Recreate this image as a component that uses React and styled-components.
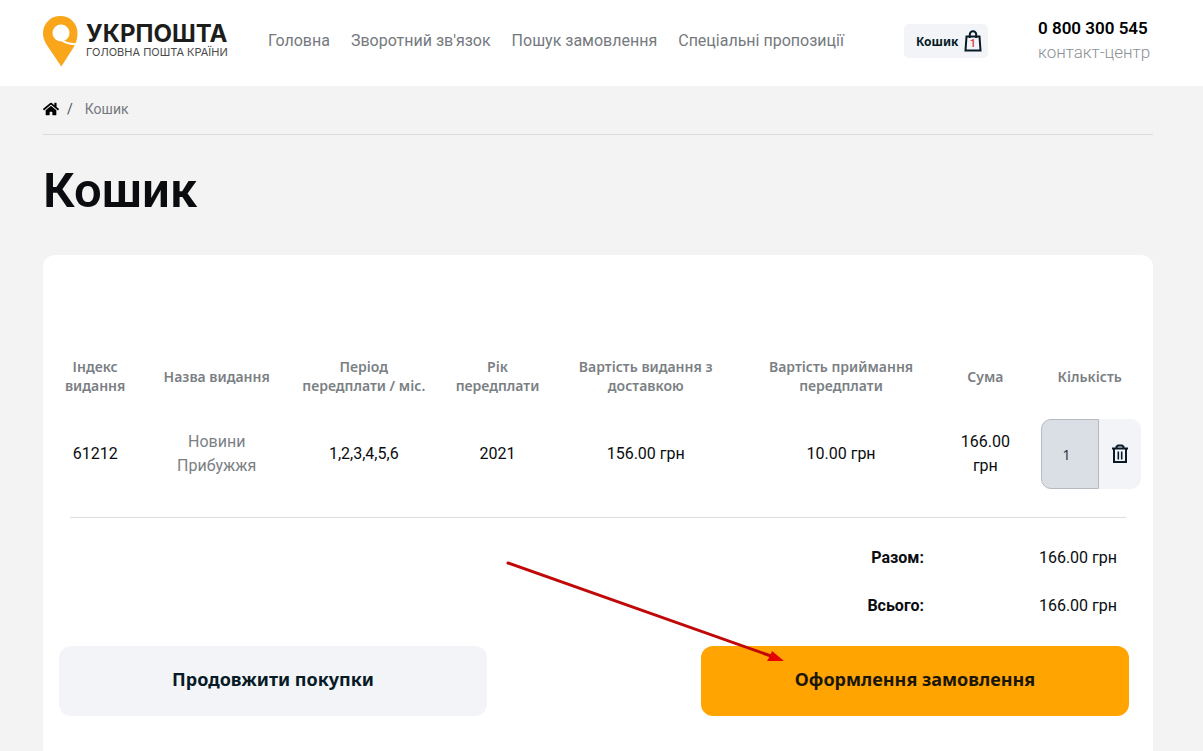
import React, { useState } from "react";
import styled, { createGlobalStyle } from "styled-components";
import { FaHome } from "react-icons/fa";

const GlobalStyle = createGlobalStyle`
  * {
    box-sizing: border-box;
  }

  body {
    margin: 0;
    background-color: #f3f3f3;
    font-family: Roboto, sans-serif;
    font-size: 16px;
    line-height: 24px;
    color: #0a0c0f;
  }
`;

const Header = styled.header`
  display: flex;
  align-items: center;
  height: 86px;
  padding: 0 50px 4px 43px;
  background-color: #ffffff;
`;

const Logo = styled.a`
  display: flex;
  align-items: center;
  gap: 8px;
  width: 187px;
  color: #1d1d1b;
  text-decoration: none;
  white-space: nowrap;
`;

const LogoText = styled.span`
  display: flex;
  flex-direction: column;
  padding-bottom: 2px;
  font-family: Inter, sans-serif;
`;

const LogoName = styled.span`
  font-size: 24px;
  line-height: 24px;
  font-weight: 700;
`;

const LogoSlogan = styled.span`
  font-size: 11px;
  line-height: 12px;
  color: #4a4a49;
`;

const Nav = styled.nav`
  display: flex;
  gap: 21px;
  margin-left: 38px;
`;

const NavLink = styled.a`
  color: #75797e;
  text-decoration: none;
  white-space: nowrap;
`;

const CartButton = styled.button`
  display: flex;
  align-items: center;
  justify-content: space-between;
  width: 84px;
  height: 34px;
  margin-left: auto;
  padding: 0 6px 0 12px;
  border: none;
  border-radius: 5px;
  background-color: #f2f4f8;
  color: #071a26;
  font-family: "Noto Sans", sans-serif;
  font-size: 12px;
  font-weight: 700;
`;

const Contact = styled.div`
  width: 115px;
  margin-left: 50px;
  padding-bottom: 2px;
  white-space: nowrap;
`;

const Phone = styled.a`
  display: block;
  color: #000000;
  font-size: 17px;
  font-weight: 600;
  text-decoration: none;
`;

const ContactLabel = styled.span`
  display: block;
  color: #8d9195;
  font-size: 17px;
  font-weight: 300;
`;

const Main = styled.main`
  padding: 0 50px 0 43px;
`;

const Breadcrumbs = styled.nav`
  display: flex;
  align-items: center;
  height: 49px;
  padding-bottom: 2px;
  border-bottom: 1px solid #d9dbdd;
  font-size: 14px;
  color: #75797e;
`;

const HomeLink = styled.a`
  display: flex;
  color: #000000;
  font-size: 16px;
`;

const Slash = styled.span`
  margin: 0 12px 0 8px;
  color: #4b4f54;
`;

const Title = styled.h1`
  margin: 27px 0 35px;
  font-size: 49px;
  line-height: 58px;
  font-weight: 600;
`;

const Card = styled.section`
  padding: 102px 0 80px;
  border-radius: 12px;
  background-color: #ffffff;
`;

const Table = styled.table`
  width: 100%;
  table-layout: fixed;
  border-collapse: collapse;
  text-align: center;
`;

const Col = styled.col`
  width: ${(props) => props.$share}%;
`;

const HeadCell = styled.th`
  height: 62px;
  padding: 0 12px 24px;
  font-family: "Noto Sans", sans-serif;
  font-size: 14px;
  line-height: 19px;
  font-weight: 600;
  color: #7b7f84;
`;

const Cell = styled.td`
  padding: 0 12px;
  color: ${(props) => (props.$muted ? "#7b7f84" : "#0a0c0f")};
`;

const Quantity = styled.div`
  display: flex;
  width: 100px;
  height: 70px;
  margin-left: 3px;
`;

const QuantityInput = styled.input`
  width: 58px;
  padding: 0 8px 0 0;
  border: 1px solid #b5bac1;
  border-radius: 10px 0 0 10px;
  background-color: #dadfe6;
  color: #33373c;
  font-family: "Noto Sans", sans-serif;
  font-size: 14px;
  text-align: center;
`;

const RemoveButton = styled.button`
  display: flex;
  flex: 1;
  align-items: center;
  justify-content: center;
  padding: 0;
  border: none;
  border-radius: 0 10px 10px 0;
  background-color: #f2f4f8;
  color: #071a26;
`;

const Divider = styled.hr`
  height: 1px;
  margin: 28px 27px;
  border: none;
  background-color: #dcdddf;
`;

const Totals = styled.dl`
  display: grid;
  grid-template-columns: 1fr 193px;
  row-gap: 24px;
  margin: 0 36px 28px 0;
  text-align: right;
`;

const TotalLabel = styled.dt`
  font-weight: 700;
`;

const TotalValue = styled.dd`
  margin: 0;
`;

const Actions = styled.div`
  display: flex;
  justify-content: space-between;
  padding: 0 24px 0 16px;
`;

const Action = styled.div`
  position: relative;
  width: 40%;
`;

const ActionButton = styled.button`
  width: 100%;
  height: 70px;
  padding: 0 0 4px;
  border: none;
  border-radius: 12px;
  background-color: ${(props) => (props.$primary ? "#ffa400" : "#f2f4f8")};
  color: ${(props) => (props.$primary ? "#1a1708" : "#071a26")};
  font-family: "Noto Sans", sans-serif;
  font-size: 18px;
  font-weight: 700;
`;

const Pointer = styled.svg`
  position: absolute;
  top: -86px;
  left: -196px;
  pointer-events: none;
`;

const links = ["Головна", "Зворотний зв'язок", "Пошук замовлення", "Спеціальні пропозиції"];

const columns = [
  { title: "Індекс видання", share: 9.4 },
  { title: "Назва видання", share: 12.5 },
  { title: "Період передплати / міс.", share: 14 },
  { title: "Рік передплати", share: 10.1 },
  { title: "Вартість видання з доставкою", share: 16.6 },
  { title: "Вартість приймання передплати", share: 18.6 },
  { title: "Сума", share: 7.4 },
  { title: "Кількість", share: 11.4 },
];

const PinIcon = () => (
  <svg width="35" height="51" viewBox="0 0 35 51" aria-hidden="true">
    <path
      fill="#f9a61a"
      d="M17.300 0C7.700 0 0 7.500 0 17c0 4.300 1.300 7.800 3.300 11.200L18.300 50.500 30.500 31.500C33 27.500 34.500 22.500 34.500 17 34.500 7.500 27 0 17.300 0Z"
    />
    <circle cx="18" cy="17" r="8.500" fill="#ffffff" />
    <path d="M18.500 24c4 3.300 8.500 4.300 16.500 4.300" fill="none" stroke="#ffffff" strokeWidth="2" />
  </svg>
);

const BagIcon = ({ count }) => (
  <svg width="18" height="22" viewBox="0 0 18 22" aria-hidden="true">
    <path d="M2.500 6.500h13l1 14h-15z" fill="none" stroke="#071a26" strokeWidth="2" />
    <path d="M5.800 8V4.500a3.200 3.200 0 0 1 6.400 0V8" fill="none" stroke="#071a26" strokeWidth="2" />
    <text x="9" y="17" textAnchor="middle" fontFamily="Roboto, sans-serif" fontSize="11" fontWeight="500" fill="#e0313f">
      {count}
    </text>
  </svg>
);

const TrashIcon = () => (
  <svg width="18" height="20" viewBox="0 0 18 20" fill="none" stroke="currentColor" strokeWidth="2" aria-hidden="true">
    <path d="M1 4.500h16M3 4.500V18h12V4.500M5.500 4V2.800L7 1.500h4l1.500 1.300V4" />
    <path d="M7.300 7.500v8M10.700 7.500v8" strokeWidth="1.600" />
  </svg>
);

const App = () => {
  const [quantity, setQuantity] = useState("1");

  return (
    <>
      <GlobalStyle />
      <Header>
        <Logo href="#" aria-label="Укрпошта">
          <PinIcon />
          <LogoText>
            <LogoName>УКРПОШТА</LogoName>
            <LogoSlogan>ГОЛОВНА ПОШТА КРАЇНИ</LogoSlogan>
          </LogoText>
        </Logo>
        <Nav>
          {links.map((link) => (
            <NavLink href="#" key={link}>{link}</NavLink>
          ))}
        </Nav>
        <CartButton type="button">
          Кошик
          <BagIcon count={1} />
        </CartButton>
        <Contact>
          <Phone href="tel:0800300545">0 800 300 545</Phone>
          <ContactLabel>контакт-центр</ContactLabel>
        </Contact>
      </Header>
      <Main>
        <Breadcrumbs>
          <HomeLink href="#" aria-label="Головна"><FaHome /></HomeLink>
          <Slash>/</Slash>
          <span>Кошик</span>
        </Breadcrumbs>
        <Title>Кошик</Title>
        <Card>
          <Table>
            <colgroup>
              {columns.map((column) => (
                <Col key={column.title} $share={column.share} />
              ))}
            </colgroup>
            <thead>
              <tr>
                {columns.map((column) => (
                  <HeadCell key={column.title} scope="col">{column.title}</HeadCell>
                ))}
              </tr>
            </thead>
            <tbody>
              <tr>
                <Cell>61212</Cell>
                <Cell $muted>Новини Прибужжя</Cell>
                <Cell>1,2,3,4,5,6</Cell>
                <Cell>2021</Cell>
                <Cell>156.00 грн</Cell>
                <Cell>10.00 грн</Cell>
                <Cell>166.00 грн</Cell>
                <Cell>
                  <Quantity>
                    <QuantityInput
                      aria-label="Кількість"
                      value={quantity}
                      onChange={(event) => setQuantity(event.target.value)}
                    />
                    <RemoveButton type="button" aria-label="Видалити">
                      <TrashIcon />
                    </RemoveButton>
                  </Quantity>
                </Cell>
              </tr>
            </tbody>
          </Table>
          <Divider />
          <Totals>
            <TotalLabel>Разом:</TotalLabel>
            <TotalValue>166.00 грн</TotalValue>
            <TotalLabel>Всього:</TotalLabel>
            <TotalValue>166.00 грн</TotalValue>
          </Totals>
          <Actions>
            <Action>
              <ActionButton type="button">Продовжити покупки</ActionButton>
            </Action>
            <Action>
              <ActionButton type="button" $primary>Оформлення замовлення</ActionButton>
              <Pointer width="280" height="104" viewBox="0 0 280 104" aria-hidden="true">
                <path d="M3 3 266 96" stroke="#c00808" strokeWidth="3" strokeLinecap="round" />
                <path d="M267 91 279 101 262 101 265 96z" fill="#e60000" />
              </Pointer>
            </Action>
          </Actions>
        </Card>
      </Main>
    </>
  );
};

export default App;
